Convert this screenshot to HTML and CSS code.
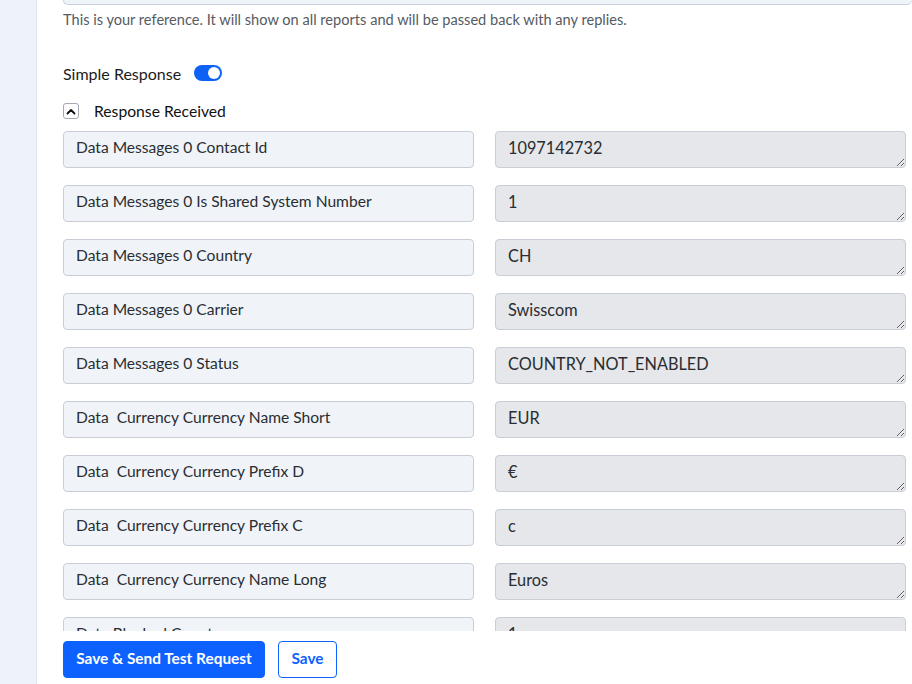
FILE: index.html
```html
<!DOCTYPE html>
<html>
<head>
<meta charset="utf-8">
<link rel="stylesheet" href="styles.css">
</head>
<body>
<div class="page">
  <aside class="sidebar"></aside>
  <main class="panel">
    <div class="ref-input"></div>
    <p class="hint">This is your reference. It will show on all reports and will be passed back with any replies.</p>
    <div class="toggle-row">
      <span class="toggle-label">Simple Response</span>
      <span class="toggle"><span class="knob"></span></span>
    </div>
    <div class="section-head">
      <span class="chev"><svg width="10" height="7" viewBox="0 0 10 7"><path d="M1.5 5.5 L5 2 L8.5 5.5" fill="none" stroke="#111" stroke-width="1.8" stroke-linecap="round" stroke-linejoin="round"/></svg></span>
      <span class="section-title">Response Received</span>
    </div>
    <div class="rows">
      <div class="row"><div class="label">Data Messages 0 Contact Id</div><textarea class="value" readonly>1097142732</textarea></div>
      <div class="row"><div class="label">Data Messages 0 Is Shared System Number</div><textarea class="value" readonly>1</textarea></div>
      <div class="row"><div class="label">Data Messages 0 Country</div><textarea class="value" readonly>CH</textarea></div>
      <div class="row"><div class="label">Data Messages 0 Carrier</div><textarea class="value" readonly>Swisscom</textarea></div>
      <div class="row"><div class="label">Data Messages 0 Status</div><textarea class="value" readonly>COUNTRY_NOT_ENABLED</textarea></div>
      <div class="row"><div class="label">Data&nbsp; Currency Currency Name Short</div><textarea class="value" readonly>EUR</textarea></div>
      <div class="row"><div class="label">Data&nbsp; Currency Currency Prefix D</div><textarea class="value" readonly>€</textarea></div>
      <div class="row"><div class="label">Data&nbsp; Currency Currency Prefix C</div><textarea class="value" readonly>c</textarea></div>
      <div class="row"><div class="label">Data&nbsp; Currency Currency Name Long</div><textarea class="value" readonly>Euros</textarea></div>
      <div class="row"><div class="label">Data Blocked Count</div><textarea class="value" readonly>1</textarea></div>
    </div>
    <div class="actions">
      <button class="btn primary">Save &amp; Send Test Request</button>
      <button class="btn outline">Save</button>
    </div>
  </main>
</div>
</body>
</html>
```
FILE: styles.css
```css
* { box-sizing: border-box; }
html, body { margin: 0; padding: 0; background: #fff; }
body { font-family: Lato, "Open Sans", sans-serif; color: #222; }
.page { display: flex; width: 912px; height: 684px; overflow: hidden; }
.sidebar { width: 37px; flex: none; background: #eef3f9; border-right: 1px solid #dde4ee; }
.panel { flex: 1; padding: 0 6px 0 26px; display: flex; flex-direction: column; min-width: 0; }
.ref-input { height: 5px; margin-right: -6px; background: #eff4fa; border: 1px solid #c9d0da; border-top: none; border-radius: 0 0 5px 5px; border-right: none; }
.hint { margin: 5px 0 0; font-size: 14.6px; line-height: 20px; color: #555b63; white-space: nowrap; }
.toggle-row { display: flex; align-items: center; margin-top: 32px; height: 22px; }
.toggle-label { font-size: 16px; color: #1c1c1c; }
.toggle { margin-left: 13px; width: 28px; height: 16px; border-radius: 8px; background: #0d62f5; display: flex; align-items: center; justify-content: flex-end; padding: 2px; }
.knob { width: 12px; height: 12px; border-radius: 50%; background: #fff; }
.section-head { display: flex; align-items: center; margin-top: 16px; height: 22px; }
.chev { width: 16px; height: 16px; border: 1px solid #a4aab2; border-radius: 3px; display: flex; align-items: center; justify-content: center; }
.section-title { margin-left: 15px; font-size: 15.7px; color: #111; }
.rows { margin-top: 9px; height: 500px; overflow: hidden; display: flex; flex-direction: column; gap: 17px; flex: none; }
.row { display: flex; gap: 21px; flex: none; }
.label, .value { width: 412px; height: 37px; border: 1px solid #c9ced6; border-radius: 4px; font-family: Lato, "Open Sans", sans-serif; line-height: 20px; }
.label { background: #f0f4f8; color: #2a2d32; padding: 5px 12px; white-space: nowrap; font-size: 15.6px; }
.value { background: #e5e7eb; color: #2a2d31; padding: 6px 12px; resize: vertical; margin: 0; overflow: hidden; outline: none; display: block; font-size: 16.3px; }
.actions { display: flex; gap: 13px; margin-top: 10px; }
.btn { height: 37px; border-radius: 4px; font-family: Lato, "Open Sans", sans-serif; font-size: 15.4px; font-weight: 700; padding: 0 0 4px; cursor: pointer; }
.primary { background: #0d62ff; color: #fff; border: 1px solid #0d62ff; width: 202px; }
.outline { background: #fff; color: #0d62ff; border: 1px solid #0d62ff; width: 59px; }
```
